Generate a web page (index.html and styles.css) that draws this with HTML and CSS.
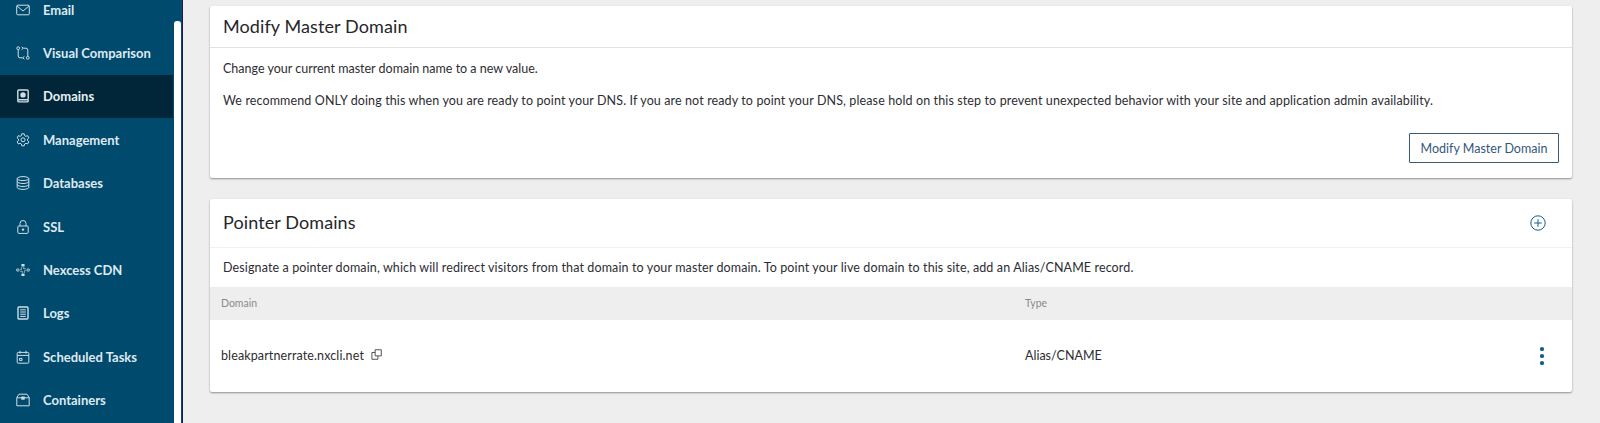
FILE: index.html
```html
<!DOCTYPE html>
<html lang="en">
<head>
    <meta charset="UTF-8">
    <title>Domains</title>
    <link rel="stylesheet" href="styles.css">
</head>
<body>
    <div class="layout">
        <nav class="sidebar">
            <a class="nav-item">
                <svg class="nav-icon" viewBox="0 0 14 14"><rect x="0.7" y="2.2" width="12.6" height="9.6" rx="1"/><path d="M1 3l6 5 6-5"/></svg>
                Email
            </a>
            <a class="nav-item">
                <svg class="nav-icon" viewBox="0 0 14 14"><circle cx="2.2" cy="2.2" r="1.4"/><circle cx="11.8" cy="11.8" r="1.4"/><path d="M2.2 3.6V10q0 1.800 1.800 1.800h2.500M11.800 10.400V4q0-1.800-1.800-1.800H7.500M5.600 .8L7.300 2.200 5.600 3.600M8.400 10.400l-1.700 1.400 1.700 1.400"/></svg>
                Visual Comparison
            </a>
            <a class="nav-item active">
                <svg class="nav-icon nav-icon-heavy" viewBox="0 0 14 14"><rect x="1.800" y="1" width="10.400" height="9.800" rx="1"/><circle cx="7" cy="5.900" r="2.700" class="nav-icon-fill"/><path d="M1.800 11v1q0 .9 1 .9h8.400q1 0 1-.9v-1"/></svg>
                Domains
            </a>
            <a class="nav-item">
                <svg class="nav-icon" viewBox="0 0 14 14"><path d="M5.800 .8h2.400l.4 1.800 1.300 .7 1.800-.6 1.200 2.100-1.400 1.200v1.600l1.400 1.200-1.200 2.100-1.800-.6-1.300 .7-.4 1.800H5.800l-.4-1.800-1.300-.7-1.800 .6L1.100 8.800l1.400-1.200V6L1.100 4.800l1.200-2.100 1.800 .6 1.300-.7z"/><circle cx="7" cy="6.800" r="2"/></svg>
                Management
            </a>
            <a class="nav-item">
                <svg class="nav-icon" viewBox="0 0 14 14"><ellipse cx="7" cy="2.600" rx="5.800" ry="2"/><path d="M1.200 2.600v8.800c0 1.100 2.600 2 5.800 2s5.800-.9 5.800-2V2.600M1.200 5.500c0 1.100 2.600 2 5.800 2s5.800-.9 5.800-2M1.200 8.500c0 1.100 2.600 2 5.800 2s5.800-.9 5.800-2"/></svg>
                Databases
            </a>
            <a class="nav-item">
                <svg class="nav-icon" viewBox="0 0 14 14"><rect x="1.800" y="6" width="10.400" height="7.400" rx="1"/><path d="M4 6V3.500a3 3 0 0 1 6 0V6"/><circle cx="7" cy="9.600" r="1.200" class="nav-icon-fill"/></svg>
                SSL
            </a>
            <a class="nav-item">
                <svg class="nav-icon" viewBox="0 0 14 14"><rect x="5.400" y="1" width="3.200" height="2.600" rx=".6" class="nav-icon-fill"/><rect x="5.400" y="10.400" width="3.200" height="2.600" rx=".6" class="nav-icon-fill"/><rect x="0.600" y="6" width="2.400" height="2" rx=".6"/><rect x="11" y="6" width="2.400" height="2" rx=".6"/><rect x="5" y="5" width="4" height="4" stroke-dasharray="1.200 .8"/></svg>
                Nexcess CDN
            </a>
            <a class="nav-item">
                <svg class="nav-icon nav-icon-heavy" viewBox="0 0 14 14"><rect x="2" y="1" width="10" height="12" rx="1"/><path d="M4.200 3.800h5.600M4.200 6h5.600M4.200 8.200h5.600M4.200 10.400h5.600" class="nav-icon-thin"/></svg>
                Logs
            </a>
            <a class="nav-item">
                <svg class="nav-icon" viewBox="0 0 14 14"><rect x="1.200" y="2.400" width="11.600" height="10.800" rx="1"/><path d="M1.200 5.400h11.600M4 .8v2.800M10 .8v2.800M3.600 8.400h2.400v2H3.600z"/></svg>
                Scheduled Tasks
            </a>
            <a class="nav-item">
                <svg class="nav-icon" viewBox="0 0 14 14"><path d="M3 1.200h8l2.200 3.300v8.300H.8V4.500zM.8 4.800h12.400"/><rect x="5.300" y="3.500" width="3.400" height="3.200" class="nav-icon-fill"/></svg>
                Containers
            </a>
            <div class="scrollbar"></div>
        </nav>

        <main class="content">
            <section class="card card-master">
                <h2 class="card-title">Modify Master Domain</h2>
                <div class="card-body">
                    <p>Change your current master domain name to a new value.</p>
                    <p class="text-wide">We recommend ONLY doing this when you are ready to point your DNS. If you are not ready to point your DNS, please hold on this step to prevent unexpected behavior with your site and application admin availability.</p>
                    <div class="card-actions">
                        <button class="btn-outline">Modify Master Domain</button>
                    </div>
                </div>
            </section>

            <section class="card">
                <div class="card-head">
                    <h2 class="card-title-plain">Pointer Domains</h2>
                    <svg class="add-icon" viewBox="0 0 16 16"><circle cx="8" cy="8" r="7.2"/><path d="M8 4.200v7.600M4.200 8h7.600"/></svg>
                </div>
                <p class="card-note text-wide">Designate a pointer domain, which will redirect visitors from that domain to your master domain. To point your live domain to this site, add an Alias/CNAME record.</p>
                <div class="table-row table-header">
                    <div>Domain</div>
                    <div>Type</div>
                </div>
                <div class="table-row table-data">
                    <div class="domain-cell text-wide">
                        bleakpartnerrate.nxcli.net
                        <svg class="copy-icon" viewBox="0 0 12 12"><path d="M4.500 .8h6.700v6.700H4.500zM4.500 3.800H1v7.400h6.500V7.500"/></svg>
                    </div>
                    <div>Alias/CNAME</div>
                    <div class="kebab"><span></span><span></span><span></span></div>
                </div>
            </section>
        </main>
    </div>
</body>
</html>
```
FILE: styles.css
```css
* {
    margin: 0;
    padding: 0;
    box-sizing: border-box;
}

html, body {
    height: 423px;
    overflow: hidden;
}

body {
    background: #eeeeee;
    font-family: 'Lato', 'Liberation Sans', sans-serif;
    color: #2d2d33;
}

.layout {
    display: flex;
    height: 423px;
}

.sidebar {
    position: relative;
    width: 183px;
    flex-shrink: 0;
    background: #004a6e;
    border-right: 1px solid #1c1c5c;
    overflow: hidden;
    padding-right: 9px;
}

.nav-item {
    display: flex;
    align-items: center;
    height: 43.4px;
    padding-left: 16px;
    color: #dfe9ef;
    font-size: 13px;
    font-weight: 700;
}

.nav-item:first-child {
    margin-top: -12.1px;
}

.nav-item.active {
    background: #01263a;
    color: #e6eef2;
}

.nav-icon {
    width: 14px;
    height: 14px;
    margin-right: 13px;
    flex-shrink: 0;
    fill: none;
    stroke: #cfdee6;
    stroke-width: 1;
}

.nav-icon-heavy {
    stroke-width: 1.4;
}

.nav-icon .nav-icon-thin {
    stroke-width: 1;
}

.nav-icon .nav-icon-fill {
    fill: #cfdee6;
    stroke: none;
}

.scrollbar {
    position: absolute;
    top: 21px;
    right: 1px;
    bottom: -10px;
    width: 7px;
    background: #fff;
    border-radius: 3px 3px 0 0;
}

.content {
    flex: 1;
    padding: 6px 28px 0 27px;
}

.card {
    background: #fff;
    border-radius: 2px;
    box-shadow: 0 1px 2px rgba(0, 0, 0, 0.4);
}

.card-master {
    margin-bottom: 21px;
}

.card-title {
    font-size: 18px;
    font-weight: 400;
    letter-spacing: 0.1px;
    color: #26262b;
    line-height: 41px;
    padding-left: 13px;
    border-bottom: 1px solid #e3e3e3;
}

.card-body {
    padding: 12px 13px 15px;
    font-size: 12.5px;
    line-height: 17px;
}

.card-body p {
    margin-bottom: 15px;
}

.text-wide {
    letter-spacing: 0.12px;
}

.card-actions {
    display: flex;
    justify-content: flex-end;
    padding-top: 9px;
}

.btn-outline {
    width: 150px;
    height: 30px;
    background: #fff;
    border: 1px solid #3d5a75;
    border-radius: 1px;
    color: #33587a;
    font-family: inherit;
    font-size: 12.5px;
}

.card-head {
    display: flex;
    align-items: center;
    justify-content: space-between;
    height: 49px;
    padding: 0 26px 0 13px;
    border-bottom: 1px solid #f0f0f0;
}

.card-title-plain {
    font-size: 18px;
    font-weight: 400;
    letter-spacing: 0.1px;
    color: #26262b;
    margin-top: -2px;
}

.add-icon {
    width: 16px;
    height: 16px;
    fill: none;
    stroke: #14618c;
    stroke-width: 1;
}

.card-note {
    padding: 11px 13px 0;
    height: 39px;
    font-size: 12.5px;
    line-height: 17px;
}

.table-row {
    display: grid;
    grid-template-columns: 804px 1fr 40px;
    align-items: center;
    padding: 0 10px 0 11px;
}

.table-header {
    height: 33px;
    padding-bottom: 2px;
    background: #eeeeee;
    color: #8a8a8a;
    font-size: 10.5px;
}

.table-data {
    height: 72px;
    font-size: 12.5px;
}

.domain-cell,
.table-data > div:nth-child(2) {
    padding-bottom: 2px;
}

.domain-cell {
    display: flex;
    align-items: center;
}

.copy-icon {
    width: 11px;
    height: 11px;
    margin: -2px 0 0 7px;
    fill: none;
    stroke: #44444a;
    stroke-width: 1;
}

.kebab {
    display: flex;
    flex-direction: column;
    align-items: center;
    gap: 3px;
}

.kebab span {
    width: 3.7px;
    height: 3.7px;
    border-radius: 50%;
    background: #14618c;
}
```
